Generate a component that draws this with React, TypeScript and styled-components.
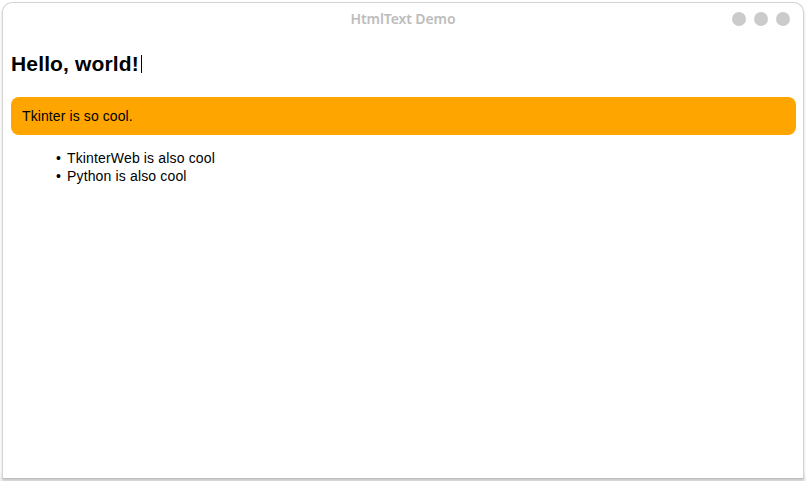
import React from "react";
import styled, { createGlobalStyle } from "styled-components";

const Global = createGlobalStyle`
  html, body {
    margin: 0;
    padding: 0;
    background: #ffffff;
  }
  body {
    width: 806px;
    height: 481px;
    overflow: hidden;
  }
`;

const Screen = styled.div`
  width: 806px;
  height: 481px;
  padding: 2px 2px 0 2px;
  box-sizing: border-box;
  background: linear-gradient(#ffffff 0, #ffffff 470px, #f2f2f2 481px);
`;

const Window = styled.div`
  width: 802px;
  height: 477px;
  box-sizing: border-box;
  border: 1px solid #d4d4d4;
  border-bottom: 1px solid #bdbdbd;
  border-radius: 10px 10px 0 0;
  background: #ffffff;
  box-shadow: 0 2px 3px rgba(0, 0, 0, 0.18);
  display: flex;
  flex-direction: column;
  overflow: hidden;
`;

const TitleBar = styled.div`
  position: relative;
  height: 32px;
  box-sizing: border-box;
  padding-bottom: 2px;
  flex: none;
  display: flex;
  align-items: center;
  justify-content: center;
`;

const Title = styled.span`
  font-family: "Noto Sans", "DejaVu Sans", sans-serif;
  font-weight: 600;
  font-size: 14px;
  color: #bcbcbc;
  letter-spacing: -0.1px;
`;

const Controls = styled.div`
  position: absolute;
  right: 13px;
  top: 9px;
  display: flex;
  gap: 8px;
`;

const Dot = styled.span`
  width: 14px;
  height: 14px;
  border-radius: 50%;
  background: #cbcbcb;
`;

const Content = styled.div`
  flex: 1;
  padding: 0 7px 0 8px;
  font-family: "Liberation Sans", Arial, sans-serif;
  color: #000;
`;

const Heading = styled.h1`
  margin: 17px 0 0 0;
  font-size: 21px;
  line-height: 24px;
  font-weight: 700;
  letter-spacing: 0.15px;
  display: flex;
  align-items: center;
`;

const Caret = styled.span`
  display: inline-block;
  width: 1px;
  height: 18px;
  margin-left: 2px;
  background: #000;
`;

const Callout = styled.div`
  margin-top: 21px;
  height: 38px;
  box-sizing: border-box;
  padding: 0 11px;
  border-radius: 8px;
  background: #ffa500;
  font-size: 14px;
  letter-spacing: 0.1px;
  display: flex;
  align-items: center;
`;

const List = styled.ul`
  margin: 14px 0 0 0;
  padding: 0 0 0 45px;
  list-style: none;
`;

const Item = styled.li`
  font-size: 14px;
  line-height: 18px;
  letter-spacing: 0.15px;
  display: flex;
  &::before {
    content: "•";
    width: 11px;
    flex: none;
  }
`;

export default function App() {
  return (
    <>
      <Global />
      <Screen>
        <Window>
          <TitleBar>
            <Title>HtmlText Demo</Title>
            <Controls>
              <Dot />
              <Dot />
              <Dot />
            </Controls>
          </TitleBar>
          <Content>
            <Heading>
              Hello, world!
              <Caret />
            </Heading>
            <Callout>Tkinter is so cool.</Callout>
            <List>
              <Item>TkinterWeb is also cool</Item>
              <Item>Python is also cool</Item>
            </List>
          </Content>
        </Window>
      </Screen>
    </>
  );
}
